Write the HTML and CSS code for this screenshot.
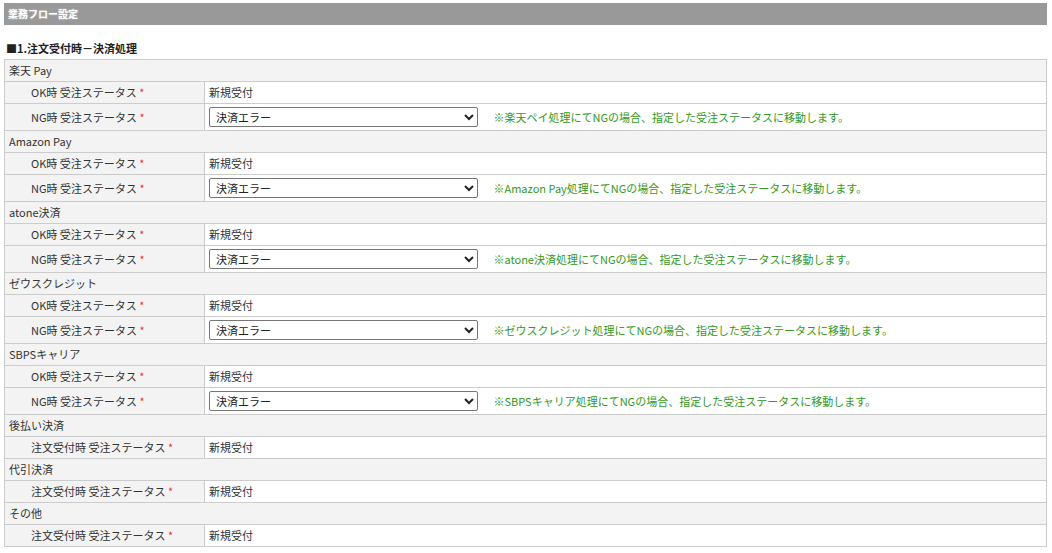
FILE: index.html
```html
<!DOCTYPE html>
<html lang="ja">
<head>
  <meta charset="UTF-8">
  <title>業務フロー設定</title>
  <link rel="stylesheet" href="styles.css">
</head>
<body>

  <div class="page">
    <div class="page-title">業務フロー設定</div>

    <h4 class="section-title">■1.注文受付時－決済処理</h4>

    <table class="flow-table">
      <tr class="group"><td colspan="2">楽天 Pay</td></tr>
      <tr>
        <th>OK時 受注ステータス <span class="req">*</span></th>
        <td>新規受付</td>
      </tr>
      <tr class="ng">
        <th>NG時 受注ステータス <span class="req">*</span></th>
        <td>
          <select><option>決済エラー</option></select>
          <span class="note">※楽天ペイ処理にてNGの場合、指定した受注ステータスに移動します。</span>
        </td>
      </tr>

      <tr class="group"><td colspan="2">Amazon Pay</td></tr>
      <tr>
        <th>OK時 受注ステータス <span class="req">*</span></th>
        <td>新規受付</td>
      </tr>
      <tr class="ng">
        <th>NG時 受注ステータス <span class="req">*</span></th>
        <td>
          <select><option>決済エラー</option></select>
          <span class="note">※Amazon Pay処理にてNGの場合、指定した受注ステータスに移動します。</span>
        </td>
      </tr>

      <tr class="group"><td colspan="2">atone決済</td></tr>
      <tr>
        <th>OK時 受注ステータス <span class="req">*</span></th>
        <td>新規受付</td>
      </tr>
      <tr class="ng">
        <th>NG時 受注ステータス <span class="req">*</span></th>
        <td>
          <select><option>決済エラー</option></select>
          <span class="note">※atone決済処理にてNGの場合、指定した受注ステータスに移動します。</span>
        </td>
      </tr>

      <tr class="group"><td colspan="2">ゼウスクレジット</td></tr>
      <tr>
        <th>OK時 受注ステータス <span class="req">*</span></th>
        <td>新規受付</td>
      </tr>
      <tr class="ng">
        <th>NG時 受注ステータス <span class="req">*</span></th>
        <td>
          <select><option>決済エラー</option></select>
          <span class="note">※ゼウスクレジット処理にてNGの場合、指定した受注ステータスに移動します。</span>
        </td>
      </tr>

      <tr class="group"><td colspan="2">SBPSキャリア</td></tr>
      <tr>
        <th>OK時 受注ステータス <span class="req">*</span></th>
        <td>新規受付</td>
      </tr>
      <tr class="ng">
        <th>NG時 受注ステータス <span class="req">*</span></th>
        <td>
          <select><option>決済エラー</option></select>
          <span class="note">※SBPSキャリア処理にてNGの場合、指定した受注ステータスに移動します。</span>
        </td>
      </tr>

      <tr class="group"><td colspan="2">後払い決済</td></tr>
      <tr>
        <th>注文受付時 受注ステータス <span class="req">*</span></th>
        <td>新規受付</td>
      </tr>

      <tr class="group"><td colspan="2">代引決済</td></tr>
      <tr>
        <th>注文受付時 受注ステータス <span class="req">*</span></th>
        <td>新規受付</td>
      </tr>

      <tr class="group"><td colspan="2">その他</td></tr>
      <tr>
        <th>注文受付時 受注ステータス <span class="req">*</span></th>
        <td>新規受付</td>
      </tr>
    </table>
  </div>

</body>
</html>
```

FILE: styles.css
```css
* { box-sizing: border-box; }
body {
  margin: 0;
  padding: 3px 5px 0 4px;
  font-family: "Noto Sans CJK JP", "DejaVu Sans", sans-serif;
  font-size: 11px;
  color: #333;
  background: #fff;
}
.page-title {
  background-color: #999999;
  color: #fff;
  font-size: 10px;
  font-weight: bold;
  height: 22px;
  line-height: 22px;
  padding: 0 4px;
  text-shadow: 0 0 2px rgba(255,255,255,0.5);
}
.section-title {
  margin: 16px 0 4px 2px;
  font-size: 11px;
  font-weight: bold;
  line-height: 14px;
  color: #222;
}
.flow-table {
  width: 100%;
  border-collapse: collapse;
  border: 1px solid #cccccc;
}
.flow-table th,
.flow-table td {
  border: 1px solid #cccccc;
  padding: 3px 4px;
  height: 22px;
  line-height: 15px;
  font-weight: normal;
  text-align: left;
  vertical-align: middle;
  white-space: nowrap;
}
.flow-table th {
  width: 200px;
  padding-left: 26px;
  background-color: #f2f3f2;
}
.flow-table tr.group td {
  background-color: #f2f3f2;
  padding-left: 4px;
}
.flow-table tr.ng th,
.flow-table tr.ng td {
  height: 27px;
}
.req {
  color: #ee3333;
}
.flow-table select {
  width: 269px;
  height: 20px;
  font-family: inherit;
  font-size: 11px;
  color: #222;
  border: 1px solid #767676;
  border-radius: 2px;
  background: #fff;
  padding: 0 2px;
  vertical-align: middle;
}
.note {
  margin-left: 13px;
  color: #339922;
  vertical-align: middle;
}
```
